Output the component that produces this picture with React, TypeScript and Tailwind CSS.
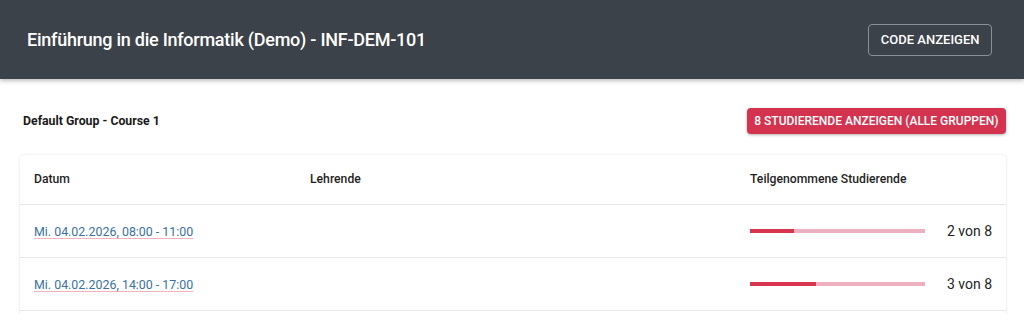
import React from "react";

const rows = [
  { date: "Mi. 04.02.2026, 08:00 - 11:00", n: 2, total: 8 },
  { date: "Mi. 04.02.2026, 14:00 - 17:00", n: 3, total: 8 },
];

export default function App() {
  return (
    <div className="w-[1024px] h-[314px] overflow-hidden bg-white" style={{ fontFamily: "Roboto, 'Liberation Sans', sans-serif" }}>
      <header className="relative z-10 h-[79px] bg-[#3b4249] flex items-center justify-between pl-[27px] pr-[32px] shadow-[0_2px_4px_rgba(0,0,0,0.25)]">
        <h1 className="text-white text-[18px] font-medium tracking-[-0.25px]">Einführung in die Informatik (Demo) - INF-DEM-101</h1>
        <button className="h-[32px] px-[11.5px] rounded-[4px] border border-[#8a9096] text-white text-[13px] font-medium uppercase">
          Code anzeigen
        </button>
      </header>
      <main className="px-[18px]">
        <div className="flex items-center justify-between pt-[29px] pl-[5px]">
          <div className="text-[12.3px] font-bold text-[#1a1a1a]">Default Group - Course 1</div>
          <button className="h-[26px] px-[7.5px] rounded-[4px] bg-[#d3334f] text-white text-[12px] font-medium uppercase shadow-[0_1px_3px_rgba(0,0,0,0.3)]">
            8 Studierende anzeigen (alle Gruppen)
          </button>
        </div>
        <div className="mt-[21px] ml-[2px] w-[986px] rounded-[4px] bg-white shadow-[0_0_3px_rgba(0,0,0,0.12)]">
          <div className="grid grid-cols-[276px_440px_270px] h-[50px] items-center border-b border-[#e6e6e6] text-[12.2px] font-medium text-[#1f1f1f]">
            <div className="pl-[14px]">Datum</div>
            <div className="pl-[14px]">Lehrende</div>
            <div className="pl-[14px]">Teilgenommene Studierende</div>
          </div>
          {rows.map((r) => (
            <div key={r.date} className="grid grid-cols-[276px_440px_270px] h-[53px] items-center border-b border-[#e6e6e6]">
              <div className="pl-[14px]">
                <a className="text-[12.4px] text-[#3a71a2] underline decoration-[#f0b3c0] underline-offset-[2px]">{r.date}</a>
              </div>
              <div />
              <div className="pl-[14px] pr-[14px] flex items-center justify-between">
                <div className="w-[175px] h-[4px] bg-[#edb0bf]">
                  <div className="h-full bg-[#d73550]" style={{ width: `${(r.n / r.total) * 100}%` }} />
                </div>
                <span className="text-[14px] text-[#222]">{r.n} von {r.total}</span>
              </div>
            </div>
          ))}
          <div className="h-[53px]" />
        </div>
      </main>
    </div>
  );
}
